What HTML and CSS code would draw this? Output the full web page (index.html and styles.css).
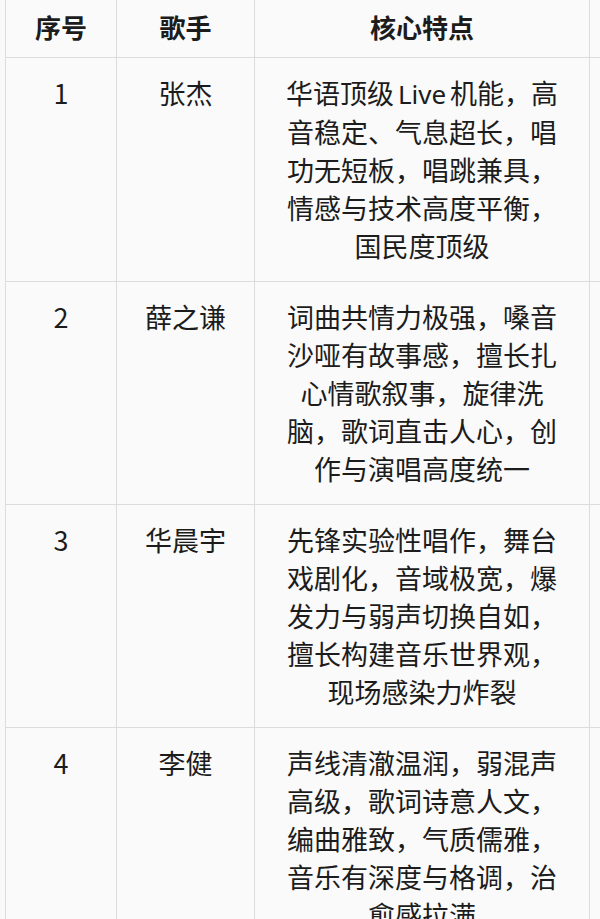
FILE: index.html
```html
<!DOCTYPE html>
<html lang="zh-CN">
<head>
<meta charset="utf-8">
<title>歌手核心特点</title>
<link rel="stylesheet" href="styles.css">
</head>
<body>
<table class="singers">
  <colgroup>
    <col class="c-no">
    <col class="c-name">
    <col class="c-desc">
    <col class="c-extra">
  </colgroup>
  <thead>
    <tr>
      <th>序号</th>
      <th>歌手</th>
      <th>核心特点</th>
      <th></th>
    </tr>
  </thead>
  <tbody>
    <tr>
      <td>1</td>
      <td>张杰</td>
      <td>华语顶级<span class="latin">Live</span>机能，高<br>音稳定、气息超长，唱<br>功无短板，唱跳兼具，<br>情感与技术高度平衡，<br>国民度顶级</td>
      <td></td>
    </tr>
    <tr>
      <td>2</td>
      <td>薛之谦</td>
      <td>词曲共情力极强，嗓音<br>沙哑有故事感，擅长扎<br>心情歌叙事，旋律洗<br>脑，歌词直击人心，创<br>作与演唱高度统一</td>
      <td></td>
    </tr>
    <tr>
      <td>3</td>
      <td>华晨宇</td>
      <td>先锋实验性唱作，舞台<br>戏剧化，音域极宽，爆<br>发力与弱声切换自如，<br>擅长构建音乐世界观，<br>现场感染力炸裂</td>
      <td></td>
    </tr>
    <tr>
      <td>4</td>
      <td>李健</td>
      <td>声线清澈温润，弱混声<br>高级，歌词诗意人文，<br>编曲雅致，气质儒雅，<br>音乐有深度与格调，治<br>愈感拉满</td>
      <td></td>
    </tr>
  </tbody>
</table>
</body>
</html>
```
FILE: styles.css
```css
html, body {
  margin: 0;
  padding: 0;
  width: 600px;
  height: 919px;
  overflow: hidden;
  background: #f9f9f9;
}

body {
  font-family: "Noto Sans CJK SC", "Noto Sans", sans-serif;
  color: #1c1c1c;
}

.singers {
  border-collapse: collapse;
  table-layout: fixed;
  width: 835px;
  margin: -1px 0 0 5px;
  background: #fafafa;
}

.c-no { width: 111px; }
.c-name { width: 138px; }
.c-desc { width: 335px; }
.c-extra { width: 251px; }

.singers th,
.singers td {
  border: 1px solid #dcdcdc;
  text-align: center;
  padding: 0;
}

.singers th {
  font-size: 26px;
  font-weight: 700;
  line-height: 53px;
  padding-bottom: 4px;
}

.singers td {
  font-size: 27px;
  font-weight: 400;
  line-height: 38px;
  vertical-align: top;
  padding: 16px 0 16px;
  white-space: nowrap;
}

.latin {
  margin: 0 4px;
  font-family: "Noto Sans", "Roboto", sans-serif;
  font-size: 26px;
}
```
